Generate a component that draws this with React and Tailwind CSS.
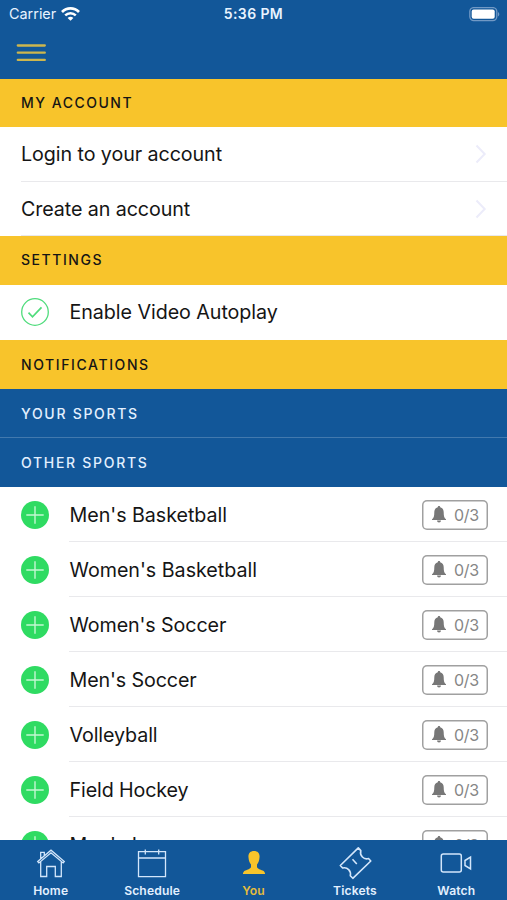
import React from "react";

const sports = [
  { name: "Men's Basketball", tracking: "tracking-[-0.04px]" },
  { name: "Women's Basketball", tracking: "tracking-[-0.02px]" },
  { name: "Women's Soccer", tracking: "tracking-[-0.1px]" },
  { name: "Men's Soccer", tracking: "tracking-[-0.12px]" },
  { name: "Volleyball", tracking: "tracking-[-0.1px]" },
  { name: "Field Hockey", tracking: "tracking-[-0.12px]" },
  { name: "Men's Lacrosse", tracking: "tracking-[-0.1px]" },
];

function SectionHeader({ children, className }) {
  return (
    <h2 className={`flex shrink-0 items-center pl-[21px] text-[14px] font-medium leading-none ${className}`}>
      <span>{children}</span>
    </h2>
  );
}

function LinkRow({ children, className }) {
  return (
    <a className={`ml-[21px] flex shrink-0 items-center justify-between border-b border-[#e9e9ec] pr-[20px] text-[19.7px] leading-none ${className}`}>
      <span className="pt-[2px]">{children}</span>
      <svg className="h-[20px] w-[12px]" viewBox="0 0 12 20" fill="none" stroke="#ececfa" strokeWidth="2">
        <path d="M1.500 1.500 9.700 10l-8.200 8.500" />
      </svg>
    </a>
  );
}

function AddIcon() {
  return (
    <svg className="h-[28px] w-[28px]" viewBox="0 0 28 28">
      <circle cx="14" cy="14" r="14" fill="#2fdb62" />
      <path d="M14 5.300v17.400M5.300 14h17.400" stroke="#c4f7d2" strokeWidth="1.400" />
    </svg>
  );
}

function BellIcon() {
  return (
    <svg className="h-[17px] w-[14px]" viewBox="0 0 14 17" fill="#777">
      <path d="M7 0c.8 0 1.200.5 1.200 1.300 2.300.6 3.500 2.400 3.500 4.900 0 4 .5 5.800 2.300 7v.8H0v-.8c1.800-1.200 2.300-3 2.300-7 0-2.500 1.200-4.300 3.500-4.900C5.800.5 6.200 0 7 0ZM5 14.500h4a2 2 0 0 1-4 0Z" />
    </svg>
  );
}

function SportRow({ name, tracking }) {
  return (
    <li className="flex h-[55px] shrink-0">
      <div className="flex w-[69px] items-center pl-[21px]">
        <AddIcon />
      </div>
      <div className="flex flex-1 items-center justify-between border-b border-[#e9e9ec] pr-[19px]">
        <span className={`pl-[0.5px] pt-[4px] text-[19.7px] leading-none ${tracking}`}>{name}</span>
        <span className="mt-px flex h-[30px] w-[66px] items-center rounded-[5px] pl-[10px] text-[16px] leading-none tracking-[-0.3px] text-[#868686] ring-[1.5px] ring-inset ring-[#a0a0a0]">
          <BellIcon />
          <span className="ml-[8px]">0/3</span>
        </span>
      </div>
    </li>
  );
}

function Tab({ label, active, children }) {
  return (
    <a className={`flex flex-1 flex-col items-center ${active ? "text-[#e5bd3c]" : "text-[#e3f0ff]"}`}>
      <svg className="mt-[6px] h-[34px] w-[36px]" viewBox="0 0 36 34" fill="none" stroke="#d3e6fb" strokeWidth="1.300">
        {children}
      </svg>
      <span className="mt-[4px] text-[12.100px] font-semibold leading-[14px] tracking-[0.15px]">{label}</span>
    </a>
  );
}

export default function App() {
  return (
    <div className="flex h-[900px] w-[507px] flex-col overflow-hidden bg-white font-['Inter','Liberation_Sans',sans-serif] text-[#151515]">
      <header className="h-[79px] shrink-0 bg-[#125799] text-[#e8f3ff]">
        <div className="grid h-[28px] grid-cols-3 items-center pl-[9px] pr-[7px]">
          <div className="flex items-center gap-[5px]">
            <span className="text-[14.400px] leading-none">Carrier</span>
            <svg className="h-[14px] w-[19px]" viewBox="0 0 19 14" fill="none" stroke="#fff">
              <path d="M1 5C5.800.2 13.200.2 18 5" strokeWidth="2.700" />
              <path d="M4.200 8.400c3-2.900 7.600-2.900 10.600 0" strokeWidth="2.500" />
              <path d="M6.600 10.900c1.700-1.500 4.100-1.500 5.800 0L9.500 13.800Z" fill="#fff" stroke="none" />
            </svg>
          </div>
          <span className="pr-[2px] text-center text-[14px] font-semibold leading-none tracking-[0.4px]">5:36 PM</span>
          <svg className="h-[15px] w-[31px] justify-self-end" viewBox="0 0 31 15">
            <rect x="0.800" y="0.600" width="27" height="13" rx="4" fill="none" stroke="#7199c5" strokeWidth="1.300" />
            <rect x="2.700" y="2.400" width="23" height="9.400" rx="2" fill="#fff" />
            <path d="M29 5c1.800.8 1.800 3.600 0 4.400Z" fill="#7199c5" />
          </svg>
        </div>
        <button className="ml-[16px] mt-[15px] block" aria-label="Menu">
          <svg className="h-[20px] w-[30px]" viewBox="0 0 30 20" stroke="#cdb64e" strokeWidth="2.300" strokeLinecap="round">
            <path d="M1.800 2.500h27M1.800 9.700h27M1.800 16.900h27" />
          </svg>
        </button>
      </header>

      <main className="flex min-h-0 flex-1 flex-col overflow-hidden">
        <SectionHeader className="h-[48px] bg-[#f8c42b] tracking-[1.500px]">MY ACCOUNT</SectionHeader>
        <LinkRow className="h-[55px] tracking-[-0.080px]">Login to your account</LinkRow>
        <LinkRow className="h-[54px] tracking-[-0.100px]">Create an account</LinkRow>
        <SectionHeader className="h-[49px] bg-[#f8c42b] pb-px tracking-[1.550px]">SETTINGS</SectionHeader>
        <div className="flex h-[55px] shrink-0 items-center pb-px pl-[21px]">
          <svg className="h-[28px] w-[28px]" viewBox="0 0 28 28" fill="none" stroke="#4fdc7c">
            <circle cx="14" cy="14" r="13.300" strokeWidth="1.300" />
            <path d="m7.500 14.700 4 4.100 9-9.400" strokeWidth="1.700" />
          </svg>
          <span className="ml-[20.500px] pt-[2px] text-[19.7px] leading-none tracking-[-0.060px]">Enable Video Autoplay</span>
        </div>
        <SectionHeader className="h-[49px] bg-[#f8c42b] tracking-[1.600px]">NOTIFICATIONS</SectionHeader>
        <SectionHeader className="h-[49px] border-b border-[#4279ae] bg-[#125799] pt-[2px] tracking-[1.700px] text-[#e3f0ff]">YOUR SPORTS</SectionHeader>
        <SectionHeader className="h-[49px] bg-[#125799] tracking-[1.700px] text-[#e3f0ff]">OTHER SPORTS</SectionHeader>
        <ul className="flex flex-col">
          {sports.map((s) => (
            <SportRow key={s.name} {...s} />
          ))}
        </ul>
      </main>

      <nav className="flex h-[60.500px] shrink-0 bg-[#125799]">
        <Tab label="Home">
          <path d="M4.700 15.500 18 4.200l13.300 11.300-1.200 1.400L18 6.800 5.900 16.900ZM7.700 15.500V30.500h6V20.500h8.600v10h6v-15M7.700 12.700V6.300h3.600v3.300" />
        </Tab>
        <Tab label="Schedule">
          <path d="M4.500 5.700h27v25h-27ZM4.500 12h27M11.300 3.500v5M24.700 3.500v5" />
        </Tab>
        <Tab label="You" active>
          <path d="M18 5c-4 0-6 2.600-5.500 6.500.2 3.400 1.300 5.300 2.500 7v2.200c0 2-3.400 2.900-5.600 3.800-1.700.7-2.400 1.900-2.500 3.500h22.200c-.1-1.600-.8-2.800-2.500-3.500-2.200-.9-5.600-1.800-5.600-3.800v-2.200c1.200-1.700 2.300-3.600 2.500-7C24 7.600 22 5 18 5Z" fill="#f8c42b" stroke="none" />
        </Tab>
        <Tab label="Tickets">
          <path d="m3.300 19.500 18-17.600 2.500 2.700c-1.300 5 3 9.400 7.700 7.900l2.300 2.500-18 17.300-2.500-2.500c1.200-4.800-3-9.200-7.700-7.800ZM15.500 13.200l4.300 4.800" strokeLinejoin="round" strokeWidth="1.600" />
        </Tab>
        <Tab label="Watch">
          <rect x="3.300" y="8" width="20" height="18" rx="2" strokeWidth="1.500" />
          <path d="m27 14.500 5.500-3.500v12L27 19.500Z" strokeWidth="1.500" />
        </Tab>
      </nav>
    </div>
  );
}
